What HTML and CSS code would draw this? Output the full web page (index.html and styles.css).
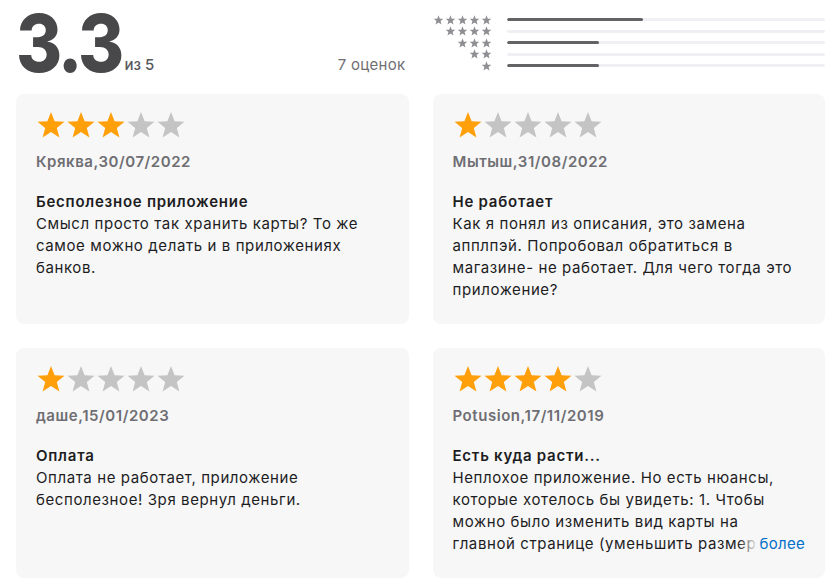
FILE: index.html
```html
<!DOCTYPE html>
<html lang="ru">
<head>
<meta charset="utf-8">
<title>Оценки и отзывы</title>
<link rel="stylesheet" href="styles.css">
</head>
<body>
<svg class="defs" width="0" height="0" aria-hidden="true">
  <defs>
    <symbol id="star" viewBox="0 0 30 28">
      <polygon points="15,1 18.6,10.2 28.5,10.7 20.8,16.9 23.4,26.5 15,21.1 6.6,26.5 9.2,16.9 1.5,10.7 11.4,10.2"/>
    </symbol>
  </defs>
</svg>
<main class="page">
  <header class="summary">
    <div class="score">
      <div class="score-main"><span class="score-num">3.3</span><span class="score-of">из 5</span></div>
      <div class="score-count">7 оценок</div>
    </div>
    <div class="histogram">
      <div class="hist-stars"><svg class="hs" viewBox="0 0 61 10"><use href="#star" x="0" width="11" height="10"/><use href="#star" x="12" width="11" height="10"/><use href="#star" x="24" width="11" height="10"/><use href="#star" x="36" width="11" height="10"/><use href="#star" x="48" width="11" height="10"/></svg></div>
      <div class="bar"><div class="bar-fill" style="width:43%"></div></div>
      <div class="hist-stars"><svg class="hs" viewBox="0 0 61 10"><use href="#star" x="12" width="11" height="10"/><use href="#star" x="24" width="11" height="10"/><use href="#star" x="36" width="11" height="10"/><use href="#star" x="48" width="11" height="10"/></svg></div>
      <div class="bar"><div class="bar-fill" style="width:0%"></div></div>
      <div class="hist-stars"><svg class="hs" viewBox="0 0 61 10"><use href="#star" x="24" width="11" height="10"/><use href="#star" x="36" width="11" height="10"/><use href="#star" x="48" width="11" height="10"/></svg></div>
      <div class="bar"><div class="bar-fill" style="width:29%"></div></div>
      <div class="hist-stars"><svg class="hs" viewBox="0 0 61 10"><use href="#star" x="36" width="11" height="10"/><use href="#star" x="48" width="11" height="10"/></svg></div>
      <div class="bar"><div class="bar-fill" style="width:0%"></div></div>
      <div class="hist-stars"><svg class="hs" viewBox="0 0 61 10"><use href="#star" x="48" width="11" height="10"/></svg></div>
      <div class="bar"><div class="bar-fill" style="width:29%"></div></div>
    </div>
  </header>

  <section class="reviews">
    <article class="card">
      <svg class="stars" viewBox="0 0 150 28"><use class="on" href="#star" x="0" width="30" height="28"/><use class="on" href="#star" x="30" width="30" height="28"/><use class="on" href="#star" x="60" width="30" height="28"/><use class="off" href="#star" x="90" width="30" height="28"/><use class="off" href="#star" x="120" width="30" height="28"/></svg>
      <div class="author">Кряква,30/07/2022</div>
      <h3 class="title">Бесполезное приложение</h3>
      <p class="text">Смысл просто так хранить карты? То же самое можно делать и в приложениях банков.</p>
    </article>

    <article class="card">
      <svg class="stars" viewBox="0 0 150 28"><use class="on" href="#star" x="0" width="30" height="28"/><use class="off" href="#star" x="30" width="30" height="28"/><use class="off" href="#star" x="60" width="30" height="28"/><use class="off" href="#star" x="90" width="30" height="28"/><use class="off" href="#star" x="120" width="30" height="28"/></svg>
      <div class="author">Мытыш,31/08/2022</div>
      <h3 class="title">Не работает</h3>
      <p class="text">Как я понял из описания, это замена апплпэй. Попробовал обратиться в магазине- не работает. Для чего тогда это приложение?</p>
    </article>

    <article class="card">
      <svg class="stars" viewBox="0 0 150 28"><use class="on" href="#star" x="0" width="30" height="28"/><use class="off" href="#star" x="30" width="30" height="28"/><use class="off" href="#star" x="60" width="30" height="28"/><use class="off" href="#star" x="90" width="30" height="28"/><use class="off" href="#star" x="120" width="30" height="28"/></svg>
      <div class="author">даше,15/01/2023</div>
      <h3 class="title">Оплата</h3>
      <p class="text">Оплата не работает, приложение бесполезное! Зря вернул деньги.</p>
    </article>

    <article class="card">
      <svg class="stars" viewBox="0 0 150 28"><use class="on" href="#star" x="0" width="30" height="28"/><use class="on" href="#star" x="30" width="30" height="28"/><use class="on" href="#star" x="60" width="30" height="28"/><use class="on" href="#star" x="90" width="30" height="28"/><use class="off" href="#star" x="120" width="30" height="28"/></svg>
      <div class="author">Potusion,17/11/2019</div>
      <h3 class="title">Есть куда расти...</h3>
      <div class="clamp">
        <p class="text">Неплохое приложение. Но есть нюансы, которые хотелось бы увидеть: 1. Чтобы можно было изменить вид карты на главной странице (уменьшить размер карточек, чтобы помещалось больше карт на экране).</p>
        <a class="more" href="#">более</a>
      </div>
    </article>
  </section>
</main>
</body>
</html>
```

FILE: styles.css
```css
* { box-sizing: border-box; }

html, body {
  margin: 0;
  padding: 0;
  background: #ffffff;
}

body {
  font-family: Inter, "Noto Sans", "Liberation Sans", sans-serif;
  color: #1d1d1f;
}

.defs { position: absolute; width: 0; height: 0; overflow: hidden; }

.page {
  width: 836px;
  padding: 0 11px 0 16px;
}

.summary {
  height: 94px;
  display: grid;
  grid-template-columns: 1fr 1fr;
  column-gap: 24px;
}

.score {
  display: flex;
  justify-content: space-between;
  align-items: baseline;
  padding-top: 2px;
  padding-right: 3px;
}

.score-main {
  display: flex;
  align-items: baseline;
}

.score-num {
  display: inline-block;
  font-size: 80px;
  line-height: 82px;
  font-weight: 800;
  letter-spacing: -3.5px;
  color: #48484a;
  transform: scaleX(0.88);
  transform-origin: 0 50%;
  margin-right: -15px;
}

.score-of {
  font-size: 15px;
  font-weight: 500;
  color: #58585d;
  margin-left: 4px;
  position: relative;
  top: -2px;
}

.score-count {
  font-size: 15px;
  letter-spacing: 0.3px;
  color: #6e6e73;
  position: relative;
  top: -2px;
}

.histogram {
  padding-top: 14px;
  display: grid;
  grid-template-columns: 61px 1fr;
  grid-auto-rows: 11.5px;
  column-gap: 13px;
  align-items: center;
}

.hist-stars {
  display: flex;
  justify-content: flex-end;
  height: 10px;
}

.hs {
  display: block;
  width: 61px;
  height: 10px;
  fill: #8e8e93;
}

.bar {
  height: 3px;
  background: #f0f0f4;
  border-radius: 2px;
  overflow: hidden;
}

.bar-fill {
  height: 100%;
  background: #636366;
  border-radius: 2px;
}

.reviews {
  display: grid;
  grid-template-columns: 1fr 1fr;
  grid-auto-rows: 230px;
  column-gap: 24px;
  row-gap: 24px;
}

.card {
  background: #f7f7f7;
  border-radius: 8px;
  padding: 17px 20px 0 20px;
  overflow: hidden;
}

.stars {
  display: block;
  width: 150px;
  height: 28px;
}

.stars .on { fill: #ff9f0a; }
.stars .off { fill: #c4c4c4; }

.author {
  margin-top: 12px;
  font-size: 15px;
  line-height: 22px;
  font-weight: 600;
  letter-spacing: 0.55px;
  color: #6e6e73;
}

.title {
  margin: 18px 0 0 0;
  font-size: 15px;
  line-height: 22px;
  font-weight: 600;
  letter-spacing: 0.75px;
  color: #1d1d1f;
}

.text {
  margin: 0;
  font-size: 15px;
  line-height: 22px;
  font-weight: 400;
  letter-spacing: 0.6px;
  color: #1d1d1f;
}

.clamp {
  position: relative;
  height: 88px;
  overflow: hidden;
}

.more {
  position: absolute;
  right: 0;
  bottom: 0;
  font-size: 15px;
  line-height: 22px;
  letter-spacing: 0.3px;
  color: #0070c9;
  text-decoration: none;
  padding-left: 22px;
  background: linear-gradient(to right, rgba(247,247,247,0) 0, #f7f7f7 20px, #f7f7f7 100%);
}
```
